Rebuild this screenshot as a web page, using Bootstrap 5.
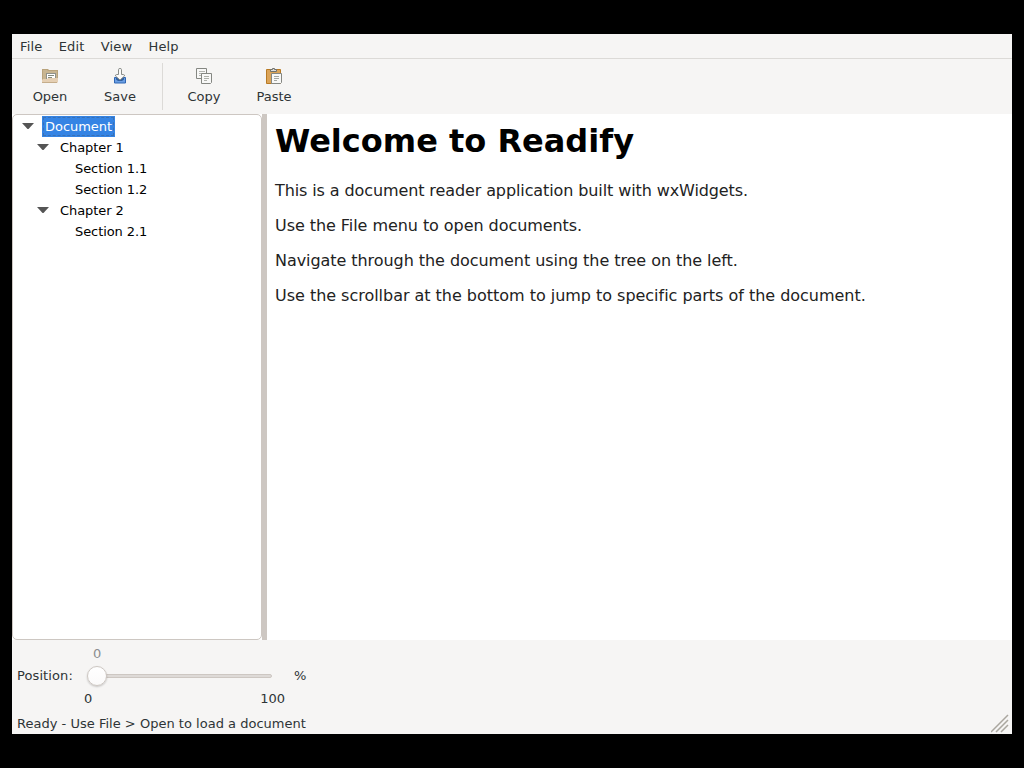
<!DOCTYPE html>
<html lang="en">
<head>
<meta charset="utf-8">
<title>Readify</title>
<link href="https://cdn.jsdelivr.net/npm/bootstrap@5.3.0/dist/css/bootstrap.min.css" rel="stylesheet">
<style>
body{background:#000;height:768px;overflow:hidden;padding:34px 12px;font:13px/20px "DejaVu Sans",sans-serif;color:#2e3436}
.app-window{height:700px;background:#f6f5f4}
.menu-bar{height:25px;border-bottom:1px solid #dcdad7;padding-left:8px;gap:16.300px}
.menu-bar .nav-link{color:inherit;padding:1px 0 0;line-height:24px;letter-spacing:.15px}
.tool-bar{height:55px;padding:0 3px}
.tool-btn{width:70px;padding:9px 0 0;border:0;font-size:13px;line-height:20px;color:#2e3436}
.tool-btn svg{display:block;margin:0 auto 3px}
.tool-sep{width:1px;height:47px;background:#dcdad7;margin:4px 6px 0 7px}
.tree-pane{width:250px;background:#fff;border:1px solid #cdc7c2;border-radius:5px;padding-top:1px;color:#000}
.tree-wrap{background:#fff}
.tree-row{height:21px;line-height:21px;letter-spacing:-.08px}
.tree-row svg{width:12px;height:6px;margin:-1px 11.500px 0 -.5px}
.lv1{padding-left:9px}.lv2{padding-left:24px}.lv3{padding-left:62px}
.tree-label{padding:0 3px}
.picked{background:#3584e4;color:#fff;outline:1px dashed #3971b5;outline-offset:-2px;height:21px;margin-left:-3px;letter-spacing:-.03px}
.sash{width:5px;background:#cdc7c2}
.page-view{background:#fff;color:#222;padding:9px 8px;font-size:16px;line-height:19px}
.page-view h1{font-size:32px;line-height:37px;font-weight:700;margin:0 0 21px;color:#000}
.page-view p{margin:0 0 16px;letter-spacing:-.06px}
.page-view p:nth-of-type(1){letter-spacing:-.105px}
.page-view p:nth-of-type(4){letter-spacing:-.025px}
.position-bar{height:72px;padding-left:5px}
.slider{width:206px;margin:0 8px 0 6px;height:72px}
.slider-value{color:#8b8e8f;padding:4px 0 0 13px;line-height:20px;height:24px}
.trough{width:184px;height:4px;margin:10px 0 0 8px;background:#dedad7;border:1px solid #cdc7c2;border-radius:2px}
.knob{width:20px;height:20px;left:-2px;top:-9px;border:1px solid #cdc7c2;border-radius:50%;background:linear-gradient(#fff,#fbfafa);box-shadow:0 1px 2px #0003}
.range-ends{margin-top:11px;padding:0 1px 0 4px}
.position-text{width:57px;letter-spacing:.1px}
.status-line{height:22px;padding-left:5px;line-height:24px;letter-spacing:.015px}
</style>
</head>
<body>
<div class="app-window d-flex flex-column">
  <nav class="menu-bar nav flex-nowrap">
    <a class="nav-link">File</a><a class="nav-link">Edit</a><a class="nav-link">View</a><a class="nav-link">Help</a>
  </nav>
  <div class="tool-bar d-flex align-items-start">
    <button class="tool-btn btn rounded-0"><svg width="16" height="16" viewBox="0 0 16 16"><path d="M0 1h6l1 1h9v12H0z" fill="#b9a37c"/><path d="M1 2h4l1 1h9v9H1z" fill="#c8b591"/><path d="M4 5h10v6H4z" fill="#8f918a"/><path d="M5 6h8v5H5z" fill="#fff"/><path d="M6 7h6v1H6zm0 2h4v1H6z" fill="#858b7d"/><path d="M1 11h4l1-1h10v4l-1 1H0v-3z" fill="#e5cfb3"/><path d="M0 14h15v1H0z" fill="#c5ad8b"/></svg>Open</button>
    <button class="tool-btn btn rounded-0"><svg width="16" height="16" viewBox="0 0 16 16"><path d="M2.500 9.500h11v5.500h-11z" fill="#6c9fe4" stroke="#2f66b3"/><path d="M4 10h8v1.500l-2 1.500H6l-2-1.500z" fill="#2f5f9f"/><path d="M6.500 1.500q0-1 1.500-1t1.500 1v5h2q1 0 1 1.500L8 12 3.500 8q0-1.500 1-1.500h2z" fill="#fafafa" stroke="#8a8d88"/></svg>Save</button>
    <div class="tool-sep"></div>
    <button class="tool-btn btn rounded-0"><svg width="16" height="16" viewBox="0 0 16 16" fill="#f8f8f7" stroke="#858782"><path d="M.5.5h10v10H.5z"/><path d="M3 3.500h6M3 5.500h5M3 7.500h3" stroke="#b4b5b1"/><path d="M5.500 5.500h10v9l-1 1h-9z"/><path d="M8 8.500h5M8 10.500h5M8 12.500h3" stroke="#aeb0aa"/></svg>Copy</button>
    <button class="tool-btn btn rounded-0"><svg width="16" height="16" viewBox="0 0 16 16"><path d="M.5 1.500h14v14H.5z" fill="#dca458" stroke="#b87a24"/><path d="M4.500 3.500v-2h2v-1h2v1h2v2z" fill="#ddd" stroke="#6e716c"/><path d="M5.500 5.500h10v9l-1 1h-9z" fill="#f8f8f7" stroke="#858782"/><path d="M8 8.500h5M8 10.500h5M8 12.500h3" stroke="#a5a7a1"/></svg>Paste</button>
  </div>
  <main class="d-flex flex-grow-1">
    <div class="tree-wrap d-flex"><div class="tree-pane">
      <div class="tree-row lv1 d-flex align-items-center"><svg viewBox="0 0 12 6"><path d="M0 0h12L6.500 6h-1z" fill="#555"/></svg><span class="tree-label picked">Document</span></div>
      <div class="tree-row lv2 d-flex align-items-center"><svg viewBox="0 0 12 6"><path d="M0 0h12L6.500 6h-1z" fill="#555"/></svg>Chapter 1</div>
      <div class="tree-row lv3">Section 1.1</div>
      <div class="tree-row lv3">Section 1.2</div>
      <div class="tree-row lv2 d-flex align-items-center"><svg viewBox="0 0 12 6"><path d="M0 0h12L6.500 6h-1z" fill="#555"/></svg>Chapter 2</div>
      <div class="tree-row lv3">Section 2.1</div>
    </div></div>
    <div class="sash"></div>
    <article class="page-view flex-grow-1">
      <h1>Welcome to Readify</h1>
      <p>This is a document reader application built with wxWidgets.</p>
      <p>Use the File menu to open documents.</p>
      <p>Navigate through the document using the tree on the left.</p>
      <p>Use the scrollbar at the bottom to jump to specific parts of the document.</p>
    </article>
  </main>
  <div class="position-bar d-flex align-items-center">
    <span class="position-text">Position:</span>
    <div class="slider">
      <div class="slider-value">0</div>
      <div class="trough position-relative"><div class="knob position-absolute"></div></div>
      <div class="range-ends d-flex justify-content-between"><span>0</span><span>100</span></div>
    </div>
    <span>%</span>
  </div>
  <footer class="status-line d-flex justify-content-between">
    <span>Ready - Use File &gt; Open to load a document</span>
    <svg width="21" height="22" viewBox="0 0 21 22" stroke="#aaa79f" stroke-width="1.500"><path d="M0 20L17 3M5 20L17 8M10 20l7-7"/></svg>
  </footer>
</div>
<script src="https://cdn.jsdelivr.net/npm/bootstrap@5.3.0/dist/js/bootstrap.bundle.min.js"></script>
</body>
</html>
